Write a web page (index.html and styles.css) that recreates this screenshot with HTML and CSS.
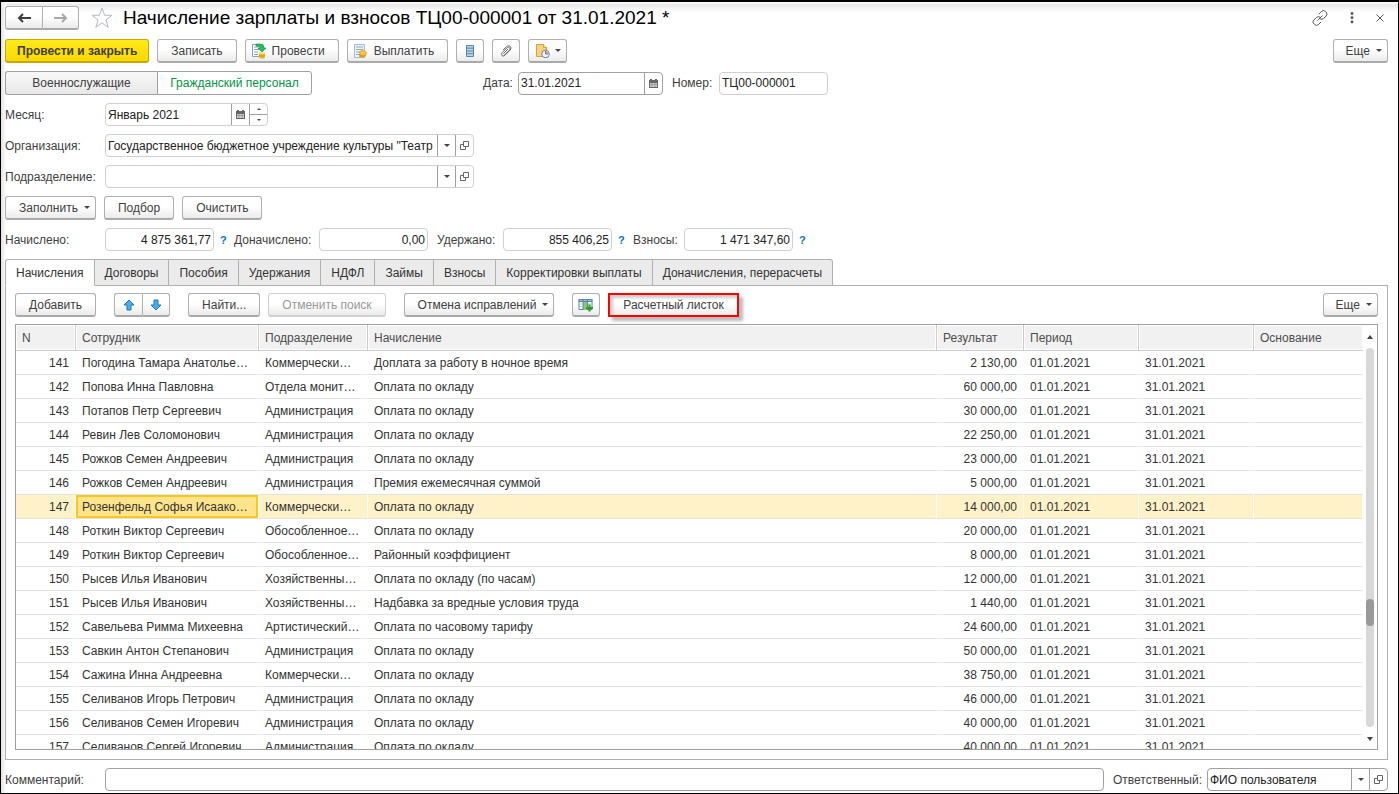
FILE: index.html
```html
<!DOCTYPE html>
<html lang="ru">
<head>
<meta charset="utf-8">
<title>Начисление зарплаты и взносов</title>
<link rel="stylesheet" href="styles.css">
</head>
<body>
<svg class="defs" aria-hidden="true">
  <symbol id="calendar" viewBox="0 0 9 9"><path d="M0 2V1h1V0h2v1h3V0h2v1h1v2H0zM0 3h9v6H0z" fill="#666"/><path d="M1 4h7v4H1z" fill="#ccc"/><path d="M1 5.500h7M3 4v4M6 4v4" stroke="#888" stroke-width=".6"/></symbol>
  <symbol id="open" viewBox="0 0 9 9"><path d="M3.500.500h5v5h-5zM3 3.500H.500v5h5V6" fill="none" stroke="#666"/></symbol>
</svg>
<main class="page">
  <header class="title-row">
    <div class="joined">
      <button class="btn nav" aria-label="Назад"><svg width="14" height="10" viewBox="0 0 14 10"><path d="M14 5H2M6 1L2 5l4 4" fill="none" stroke="#3f3f3f" stroke-width="2"/></svg></button>
      <button class="btn nav" aria-label="Вперед"><svg width="14" height="10" viewBox="0 0 14 10"><path d="M0 5h12M8 1l4 4-4 4" fill="none" stroke="#a8a8a8" stroke-width="2"/></svg></button>
    </div>
    <button class="plain star" aria-label="В избранное"><svg width="22" height="22" viewBox="0 0 22 22"><path d="M11 1l2.600 7.300H21l-6 4.600 2.200 7.500-6.200-4.500-6.200 4.500L7 12.900 1 8.300h7.400z" fill="#fff" stroke="#b4bac2"/></svg></button>
    <h1>Начисление зарплаты и взносов ТЦ00-000001 от 31.01.2021 *</h1>
    <div class="window-tools">
      <button class="plain" aria-label="Ссылка"><svg width="16" height="16" viewBox="0 0 16 16"><path d="M7 4l2.500-2.500a2.800 2.800 0 0 1 4 0l.6.600a2.800 2.800 0 0 1 0 4L11.500 8.500a2.800 2.800 0 0 1-3.500.300M9 12l-2.500 2.500a2.800 2.800 0 0 1-4 0l-.6-.6a2.800 2.800 0 0 1 0-4L4.500 7.500A2.800 2.800 0 0 1 8 7.200M5.500 10.500l5-5" fill="none" stroke="#555"/></svg></button>
      <button class="plain" aria-label="Меню"><svg width="4" height="12" viewBox="0 0 4 12"><g fill="#555"><circle cx="2" cy="1.500" r="1.400"/><circle cx="2" cy="5.700" r="1.400"/><circle cx="2" cy="10" r="1.400"/></g></svg></button>
      <button class="plain" aria-label="Закрыть"><svg width="8" height="8" viewBox="0 0 8 8"><path d="M.500.500l7 7M7.500.500l-7 7" stroke="#555"/></svg></button>
    </div>
  </header>

  <div class="toolbar">
    <button class="btn primary">Провести и закрыть</button>
    <button class="btn">Записать</button>
    <button class="btn with-icon"><svg width="16" height="16" viewBox="0 0 16 16"><path d="M1.500 1.500h10v12h-10z" fill="#fff" stroke="#8aa0b8"/><path d="M3 4h4M3 6.500h5M3 9h4M3 11.500h4" stroke="#8aa0b8"/><path d="M5 1h4q4 0 4 4h2l-4 4-4-4h2q0-2-4-2z" fill="#22c065" stroke="#13853f" stroke-width=".6"/><path d="M8 10v4c0 2 6 2 6 0v-4z" fill="#e9b52c"/><ellipse cx="11" cy="10" rx="3" ry="1.300" fill="#ffe27a"/><path d="M8 12c0 1.500 6 1.500 6 0" fill="none" stroke="#b98a18" stroke-width=".7"/></svg>Провести</button>
    <button class="btn with-icon"><svg width="16" height="16" viewBox="0 0 16 16"><path d="M1.500 1.500h10v13h-10z" fill="#edf3fa" stroke="#a3b9d2"/><path d="M3 4h7M3 6.500h7M3 9h4M3 11.500h3" stroke="#8fa9c5"/><path d="M6 11v2c0 2.500 7 2 7-.5V10z" fill="#dfa325"/><ellipse cx="10" cy="10" rx="3.500" ry="2.500" fill="#f6c648" stroke="#d49b22" stroke-width=".7"/></svg>Выплатить</button>
    <button class="btn icon" aria-label="Список"><svg width="10" height="12" viewBox="0 0 10 12"><path d="M1.500.500h7v11h-7z" fill="#b5d3ea" stroke="#5c86a8"/><path d="M1 3.200h8M1 6h8M1 8.700h8" stroke="#5c86a8"/></svg></button>
    <button class="btn icon" aria-label="Файлы"><svg width="12" height="12" viewBox="0 0 12 12"><path d="M3.500 8.500l4.500-4.500M4.500 10l4.800-4.800c1.700-2-.6-4-2.300-2.400L2.300 7.500C.2 9.800 2.700 12.300 5 10.200L10 5.200c2.600-3-1-6-3.500-3.500L3 5" fill="none" stroke="#666"/></svg></button>
    <button class="btn drop reports" aria-label="Отчеты"><svg width="16" height="16" viewBox="0 0 16 16"><path d="M1.500 1.500h7l3 3v9h-10z" fill="#f6d27d" stroke="#d2a441"/><path d="M8.500 1.500v3h3" fill="#fff3cd" stroke="#d2a441"/><circle cx="10.500" cy="11" r="3.800" fill="#eef5ff" stroke="#6783a7"/><path d="M10.500 11V7.500A3.500 3.500 0 0 1 14 11z" fill="#e9a5a0"/><path d="M10.500 8v3H13" fill="none" stroke="#46658c" stroke-width=".8"/></svg></button>
    <button class="btn drop push">Еще</button>
  </div>

  <div class="form-row">
    <div class="joined switch" role="group" aria-label="Вид персонала">
      <button class="btn">Военнослужащие</button>
      <button class="btn chosen">Гражданский персонал</button>
    </div>
    <label for="date" class="date-label">Дата:</label>
    <div class="field strong date-field"><input id="date" value="31.01.2021"><button aria-label="Календарь"><svg width="9" height="9"><use href="#calendar"/></svg></button></div>
    <label for="number" class="number-label">Номер:</label>
    <div class="field amount"><input id="number" value="ТЦ00-000001"></div>
  </div>

  <div class="form-row">
    <label for="month" class="lead">Месяц:</label>
    <div class="field month"><input id="month" value="Январь 2021"><button aria-label="Календарь"><svg width="9" height="9"><use href="#calendar"/></svg></button><span class="spin"><button class="up" aria-label="Больше"></button><button class="down" aria-label="Меньше"></button></span></div>
  </div>
  <div class="form-row">
    <label for="org" class="lead">Организация:</label>
    <div class="field combo"><input id="org" value="Государственное бюджетное учреждение культуры &quot;Театр"><button class="arrow" aria-label="Выбрать"></button><button aria-label="Открыть"><svg width="9" height="9"><use href="#open"/></svg></button></div>
  </div>
  <div class="form-row">
    <label for="dept" class="lead">Подразделение:</label>
    <div class="field combo"><input id="dept"><button class="arrow" aria-label="Выбрать"></button><button aria-label="Открыть"><svg width="9" height="9"><use href="#open"/></svg></button></div>
  </div>
  <div class="toolbar fill-row">
    <button class="btn drop">Заполнить</button>
    <button class="btn">Подбор</button>
    <button class="btn">Очистить</button>
  </div>
  <div class="form-row totals">
    <label for="s1" class="lead">Начислено:</label>
    <div class="field amount"><input id="s1" value="4 875 361,77"></div><a class="help" href="#">?</a>
    <label for="s2" class="s2">Доначислено:</label>
    <div class="field amount"><input id="s2" value="0,00"></div>
    <label for="s3" class="s3">Удержано:</label>
    <div class="field amount"><input id="s3" value="855 406,25"></div><a class="help" href="#">?</a>
    <label for="s4" class="s4">Взносы:</label>
    <div class="field amount"><input id="s4" value="1 471 347,60"></div><a class="help" href="#">?</a>
  </div>

  <nav class="tabs" role="tablist">
    <button role="tab" aria-selected="true" class="active">Начисления</button><button role="tab">Договоры</button><button role="tab">Пособия</button><button role="tab">Удержания</button><button role="tab">НДФЛ</button><button role="tab">Займы</button><button role="tab">Взносы</button><button role="tab">Корректировки выплаты</button><button role="tab">Доначисления, перерасчеты</button>
  </nav>

  <section class="panel">
    <div class="toolbar panel-tools">
      <button class="btn">Добавить</button>
      <div class="joined move">
        <button class="btn" aria-label="Вверх"><svg width="12" height="12" viewBox="0 0 12 12"><path d="M6 1l5 5H8v5H4V6H1z" fill="#45b0ee" stroke="#2376ae"/></svg></button>
        <button class="btn" aria-label="Вниз"><svg width="12" height="12" viewBox="0 0 12 12"><path d="M6 11l5-5H8V1H4v5H1z" fill="#45b0ee" stroke="#2376ae"/></svg></button>
      </div>
      <button class="btn">Найти...</button>
      <button class="btn" disabled>Отменить поиск</button>
      <button class="btn drop wide-gap">Отмена исправлений</button>
      <button class="btn icon wide-gap" aria-label="Показать колонки"><svg width="16" height="14" viewBox="0 0 16 14"><path d="M1 1.500h13v10H1z" fill="#fff" stroke="#5d84a4"/><path d="M1 1.500h13v2H1z" fill="#9fc0d8" stroke="#5d84a4"/><path d="M5 4h4v8H5z" fill="#7fd06b"/><path d="M5 1v11M9.500 1v10" stroke="#5d84a4"/><path d="M1 6h4M1 8.500h4M10 6h4" stroke="#b7cbdb"/><path d="M11.500 6.500v7M8 10h7" stroke="#2f9e28" stroke-width="2.200"/></svg></button>
      <button class="btn payslip">Расчетный листок</button>
      <button class="btn drop push">Еще</button>
    </div>
    <div class="grid">
      <div class="rows">
        <table>
          <colgroup><col class="c-n"><col class="c-emp"><col class="c-dept"><col><col class="c-sum"><col class="c-date"><col class="c-date"><col class="c-base"></colgroup>
          <thead><tr><th>N</th><th>Сотрудник</th><th>Подразделение</th><th>Начисление</th><th>Результат</th><th>Период</th><th></th><th>Основание</th></tr></thead>
          <tbody>
            <tr><td>141</td><td>Погодина Тамара Анатолье…</td><td>Коммерчески…</td><td>Доплата за работу в ночное время</td><td>2 130,00</td><td>01.01.2021</td><td>31.01.2021</td><td></td></tr>
            <tr><td>142</td><td>Попова Инна Павловна</td><td>Отдела монит…</td><td>Оплата по окладу</td><td>60 000,00</td><td>01.01.2021</td><td>31.01.2021</td><td></td></tr>
            <tr><td>143</td><td>Потапов Петр Сергеевич</td><td>Администрация</td><td>Оплата по окладу</td><td>30 000,00</td><td>01.01.2021</td><td>31.01.2021</td><td></td></tr>
            <tr><td>144</td><td>Ревин Лев Соломонович</td><td>Администрация</td><td>Оплата по окладу</td><td>22 250,00</td><td>01.01.2021</td><td>31.01.2021</td><td></td></tr>
            <tr><td>145</td><td>Рожков Семен Андреевич</td><td>Администрация</td><td>Оплата по окладу</td><td>23 000,00</td><td>01.01.2021</td><td>31.01.2021</td><td></td></tr>
            <tr><td>146</td><td>Рожков Семен Андреевич</td><td>Администрация</td><td>Премия ежемесячная суммой</td><td>5 000,00</td><td>01.01.2021</td><td>31.01.2021</td><td></td></tr>
            <tr class="current"><td>147</td><td class="cell">Розенфельд Софья Исаако…</td><td>Коммерчески…</td><td>Оплата по окладу</td><td>14 000,00</td><td>01.01.2021</td><td>31.01.2021</td><td></td></tr>
            <tr><td>148</td><td>Роткин Виктор Сергеевич</td><td>Обособленное…</td><td>Оплата по окладу</td><td>20 000,00</td><td>01.01.2021</td><td>31.01.2021</td><td></td></tr>
            <tr><td>149</td><td>Роткин Виктор Сергеевич</td><td>Обособленное…</td><td>Районный коэффициент</td><td>8 000,00</td><td>01.01.2021</td><td>31.01.2021</td><td></td></tr>
            <tr><td>150</td><td>Рысев Илья Иванович</td><td>Хозяйственны…</td><td>Оплата по окладу (по часам)</td><td>12 000,00</td><td>01.01.2021</td><td>31.01.2021</td><td></td></tr>
            <tr><td>151</td><td>Рысев Илья Иванович</td><td>Хозяйственны…</td><td>Надбавка за вредные условия труда</td><td>1 440,00</td><td>01.01.2021</td><td>31.01.2021</td><td></td></tr>
            <tr><td>152</td><td>Савельева Римма Михеевна</td><td>Артистический…</td><td>Оплата по часовому тарифу</td><td>24 600,00</td><td>01.01.2021</td><td>31.01.2021</td><td></td></tr>
            <tr><td>153</td><td>Савкин Антон Степанович</td><td>Администрация</td><td>Оплата по окладу</td><td>50 000,00</td><td>01.01.2021</td><td>31.01.2021</td><td></td></tr>
            <tr><td>154</td><td>Сажина Инна Андреевна</td><td>Коммерчески…</td><td>Оплата по окладу</td><td>38 750,00</td><td>01.01.2021</td><td>31.01.2021</td><td></td></tr>
            <tr><td>155</td><td>Селиванов Игорь Петрович</td><td>Администрация</td><td>Оплата по окладу</td><td>46 000,00</td><td>01.01.2021</td><td>31.01.2021</td><td></td></tr>
            <tr><td>156</td><td>Селиванов Семен Игоревич</td><td>Администрация</td><td>Оплата по окладу</td><td>40 000,00</td><td>01.01.2021</td><td>31.01.2021</td><td></td></tr>
            <tr><td>157</td><td>Селиванов Сергей Игоревич</td><td>Администрация</td><td>Оплата по окладу</td><td>40 000,00</td><td>01.01.2021</td><td>31.01.2021</td><td></td></tr>
          </tbody>
        </table>
      </div>
      <div class="scroll" aria-hidden="true"><span class="scroll-up"></span><div class="track"><div class="before"></div><div class="thumb"></div><div class="after"></div></div><span class="scroll-down"></span></div>
    </div>
  </section>

  <footer class="form-row footer">
    <label for="comment" class="lead">Комментарий:</label>
    <div class="field strong comment"><input id="comment"></div>
    <label for="owner" class="owner-label">Ответственный:</label>
    <div class="field strong owner"><input id="owner" value="ФИО пользователя"><button class="arrow" aria-label="Выбрать"></button><button aria-label="Открыть"><svg width="9" height="9"><use href="#open"/></svg></button></div>
  </footer>
</main>
</body>
</html>
```
FILE: styles.css
```css
* { box-sizing: border-box; }
body { margin: 0; background: #fff; }
body, button, input { font: 12px/16px "Liberation Sans", Arial, sans-serif; }
button, input { margin: 0; padding: 0; border: 0; color: #404040; }
svg { display: block; flex: none; }
.defs { display: none; }

.page {
  display: flex;
  flex-direction: column;
  height: 100vh;
  margin: 0;
  padding: 4px 10px 2px 4px;
  border: 1px solid #000;
  border-top-width: 2px;
  color: #404040;
  background:
    linear-gradient(90deg, #e2e2e2, #fff) 0 0 / 5px 100% no-repeat,
    linear-gradient(#fff, #e8e8e8 30%, #fff) 0 0 / 100% 10px no-repeat,
    #fff;
}

/* Buttons */
.btn {
  display: inline-flex;
  align-items: center;
  justify-content: center;
  height: 24px;
  padding: 0 13px;
  border: 1px solid #b0b0b0;
  border-bottom: 2px solid #aaa;
  border-radius: 3px;
  background: linear-gradient(#fff 45%, #ebebeb);
  white-space: nowrap;
}
.btn:disabled { color: #999; border-color: #d0d0d0; }
.primary {
  padding: 0 11px;
  border-color: #c9a600;
  background: linear-gradient(#ffea1a, #fbd800);
  font-weight: bold;
}
.with-icon { gap: 5px; padding-left: 5px; }
.icon { width: 28px; padding: 0; }
.drop::after, .arrow::after, .up::after, .down::after, .scroll-up, .scroll-down {
  content: "";
  border: solid transparent;
  border-width: 3px 3px 0;
  border-top-color: #444;
}
.drop { gap: 6px; padding-right: 5px; }
.push { margin-left: auto; padding-left: 12px; }
.plain { background: none; }
.joined { display: flex; }
.joined .btn:first-child { border-right: 0; border-radius: 3px 0 0 3px; }
.joined .btn:last-child { border-radius: 0 3px 3px 0; }

/* Title */
.title-row { display: flex; align-items: center; height: 24px; }
.nav { width: 37px; padding: 0; }
.star { margin: 0 10px 0 12px; }
h1 { margin: 0; color: #000; font-size: 19px; line-height: 24px; font-weight: normal; white-space: nowrap; }
.window-tools { display: flex; align-items: center; gap: 22px; margin-left: auto; padding-right: 4px; }

.toolbar { display: flex; gap: 8px; margin-top: 9px; }
.reports { gap: 4px; padding-left: 6px; }

/* Form */
.form-row { display: flex; align-items: center; margin-top: 8px; }
.lead { flex: none; width: 100px; }
label { white-space: nowrap; }
.field {
  display: flex;
  flex: none;
  height: 23px;
  overflow: hidden;
  border: 1px solid #d0d0d0;
  border-radius: 4px;
  background: #fff;
}
.field input { flex: 1; min-width: 0; padding: 0 2px; background: none; color: #222; outline: 0; }
.field > button, .spin { flex: none; width: 18px; border-left: 1px solid #a0a0a0; }
.field button { display: flex; align-items: center; justify-content: center; background: none; }
.strong { border-color: #a0a0a0; }
.spin { display: flex; flex-direction: column; }
.spin button { flex: 1; }
.spin .down { border-top: 1px solid #a0a0a0; }
.up::after, .down::after { border-width: 2px 2px 0; }
.up::after { transform: rotate(180deg); }
.switch .btn:first-child { width: 152px; }
.switch .btn:last-child { width: 155px; padding: 0; }
.switch .btn { border-color: #a0a0a0; border-bottom-width: 1px; background: linear-gradient(#f8f8f8, #e8e8e8); }
.switch .chosen { background: #fff; color: #009646; }
.date-label { width: 35px; margin-left: 171px; }
.date-field { width: 145px; }
.number-label { width: 47px; margin-left: 9px; }
.amount { width: 109px; }
.month { width: 163px; }
.combo { width: 369px; }
.fill-row { margin-top: 8px; }
.totals .field input { text-align: right; }
.help { width: 20px; padding-left: 6px; color: #0078c8; font-size: 11px; font-weight: bold; text-decoration: none; }
.s2 { width: 85px; }
.s3 { width: 66px; margin-left: 9px; }
.s4 { width: 51px; margin-left: 1px; }

/* Tabs */
.tabs { position: relative; display: flex; height: 27px; margin-top: 8px; }
.tabs button {
  height: 27px;
  padding: 0 10px;
  border: 1px solid #b0b0b0;
  border-left-width: 0;
  background: #ebebeb;
  color: #333;
  white-space: nowrap;
}
.tabs .active { border-left-width: 1px; border-bottom-color: #fff; border-top-left-radius: 3px; background: #fff; }
.tabs button:last-child { border-top-right-radius: 3px; }

.panel {
  display: flex;
  flex: 1;
  flex-direction: column;
  min-height: 0;
  margin-top: -1px;
  padding: 7px 9px 9px;
  border: 1px solid #b0b0b0;
}
.panel-tools { margin: 0; }
.move { margin: 0 10px; }
.move .btn { width: 28px; padding: 0; }
.wide-gap { margin-left: 10px; }
.payslip { border: 2px solid #f00; border-radius: 0; box-shadow: 4px 4px 3px #bbb, inset 3px 3px 3px #ccc; }

/* Grid */
.grid {
  display: flex;
  flex: 1;
  min-height: 0;
  margin-top: 7px;
  border: 1px solid #a0a0a0;
}
.rows { flex: 1; min-width: 0; overflow: hidden; }
table { width: 100%; border-collapse: separate; border-spacing: 0; table-layout: fixed; }
.c-n { width: 60px; }
.c-emp { width: 183px; }
.c-dept { width: 109px; }
.c-sum { width: 87px; }
.c-date { width: 115px; }
.c-base { width: 109px; }
th, td { padding: 0 6px; overflow: hidden; text-align: left; text-overflow: ellipsis; white-space: nowrap; }
th {
  height: 26px;
  border: solid #ccc;
  border-width: 0 1px 1px 0;
  background: #f1f1f1;
  box-shadow: inset 0 0 0 1px #fff;
  color: #4d4d4d;
  font-weight: normal;
}
th:last-child { border-right: 0; }
td { height: 24px; border-right: 1px solid #fff; border-bottom: 1px solid #e2e2e2; color: #333; }
td:nth-child(1), td:nth-child(5) { text-align: right; }
.current td { background: #fff2c8; }
.current .cell { background: #ffe48c; box-shadow: inset 0 0 0 2px #f7c81e; }

.scroll { display: flex; flex: none; flex-direction: column; align-items: center; width: 14px; padding: 10px 0 8px; }
.scroll-up { border-width: 0 3px 4px; border-bottom-color: #444; }
.scroll-down { border-width: 4px 3px 0; }
.track { display: flex; flex: 1; flex-direction: column; width: 8px; margin: 9px 0 10px; overflow: hidden; border-radius: 4px; background: #d8d8d8; }
.before { flex: 252; }
.thumb { flex: 27; border-radius: 4px; background: #999; }
.after { flex: 101; }

.footer { margin-top: 8px; }
.comment { flex: 1; }
.owner-label { width: 94px; margin-left: 9px; }
.owner { width: 181px; }
```
